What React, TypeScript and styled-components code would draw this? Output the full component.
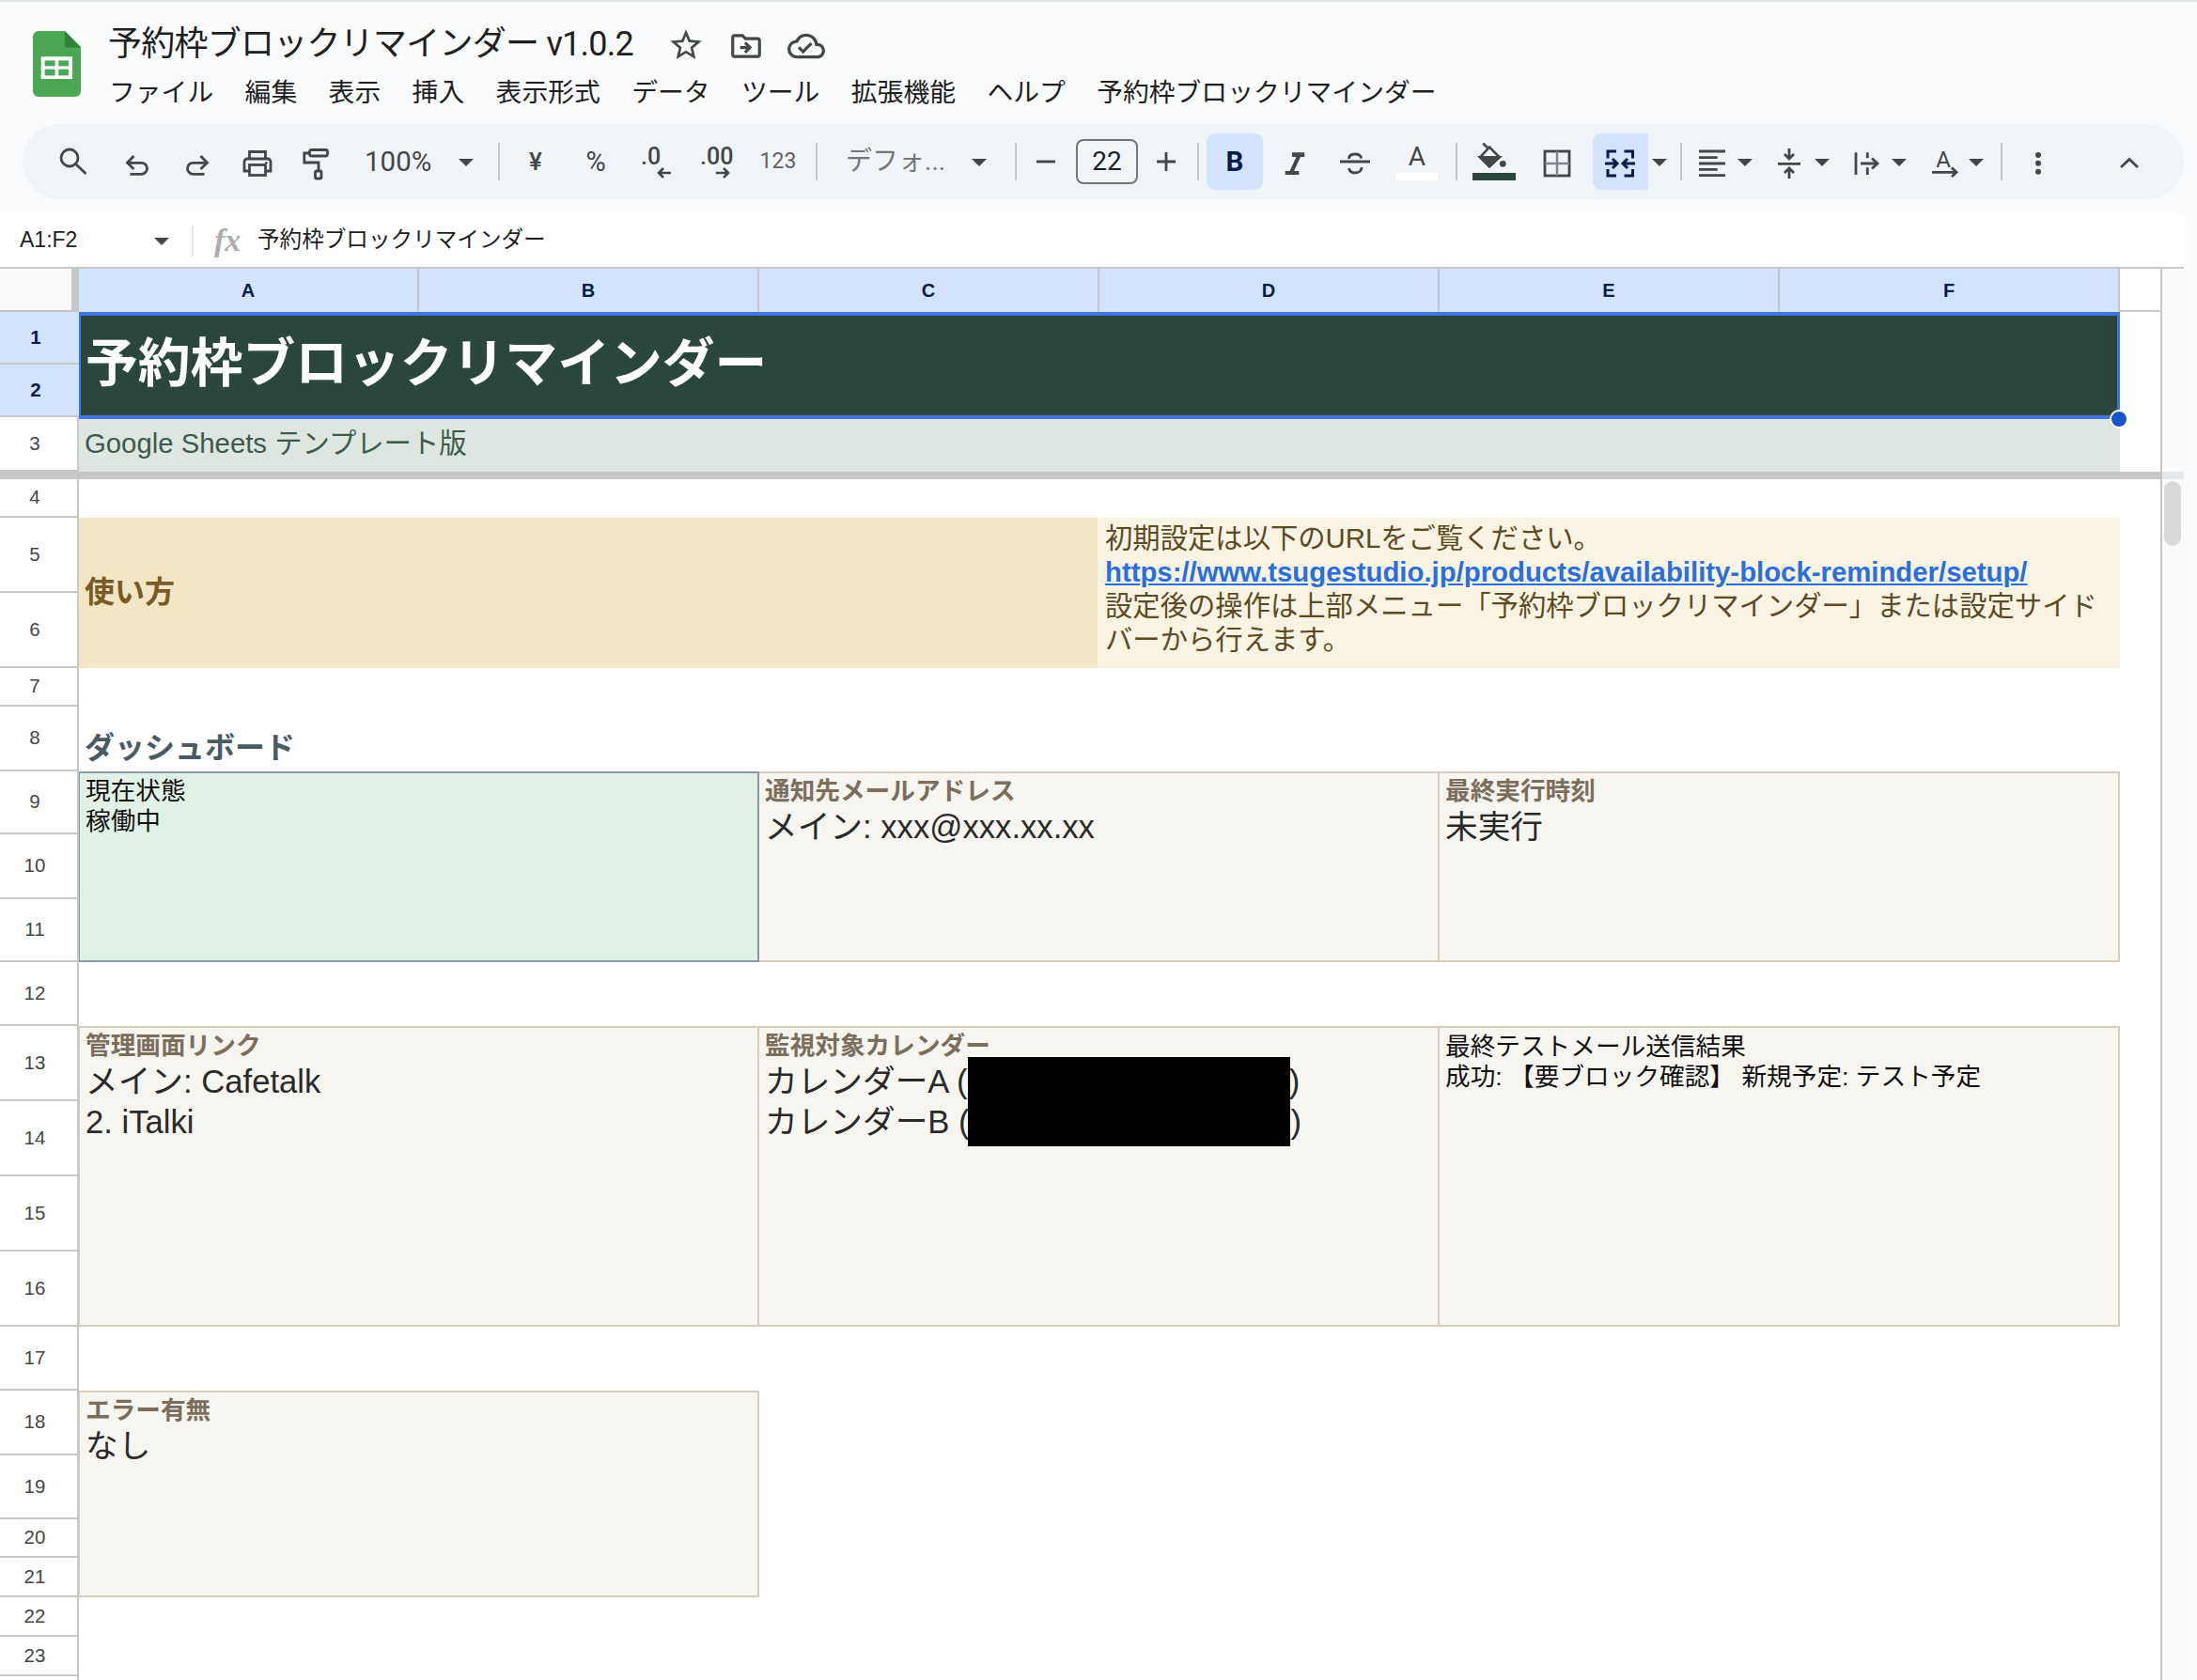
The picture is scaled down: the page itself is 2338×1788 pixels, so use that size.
import styled, { createGlobalStyle } from "styled-components";
import { MdOutlineStarBorder, MdOutlineDriveFileMove, MdOutlineCloudDone } from "react-icons/md";

const sheetFont = `"Liberation Sans", "Noto Sans CJK JP", sans-serif`;
const uiFont = `Roboto, "Noto Sans CJK JP", sans-serif`;

const Global = createGlobalStyle`
  * { box-sizing: border-box; }
  html, body { margin: 0; padding: 0; overflow: hidden; background: #f9fbfd; }
`;

// sheet row number -> grid line (row 1 of the grid is the column header, the frozen bar sits after row 3)
const line = (n: number) => (n <= 3 ? n + 1 : n + 2);

const rowNumbers = Array.from({ length: 23 }, (_, i) => i + 1);
const menus = ["ファイル", "編集", "表示", "挿入", "表示形式", "データ", "ツール", "拡張機能", "ヘルプ", "予約枠ブロックリマインダー"];

const App = () => {
  return (
    <Page>
      <Global />
      <TopStrip />
      <Header>
        <Logo viewBox="0 0 51 70">
          <path d="M6 0H34L51 17V64a6 6 0 0 1-6 6H6a6 6 0 0 1-6-6V6a6 6 0 0 1 6-6z" fill="#4ba754" />
          <path d="M34 0L51 17.4H34z" fill="#2f8237" />
          <rect x="8.7" y="27.3" width="33.4" height="23.7" fill="#fff" />
          <rect x="12.6" y="31.4" width="11" height="6" fill="#4ba754" />
          <rect x="27.3" y="31.4" width="10.7" height="6" fill="#4ba754" />
          <rect x="12.6" y="40.7" width="11" height="6.7" fill="#4ba754" />
          <rect x="27.3" y="40.7" width="10.7" height="6.7" fill="#4ba754" />
        </Logo>
        <HeaderText>
          <TitleRow>
            <DocTitle>予約枠ブロックリマインダー v1.0.2</DocTitle>
            <StarIcon />
            <MoveIcon />
            <CloudIcon />
          </TitleRow>
          <MenuBar>
            {menus.map((m) => (
              <MenuItem key={m}>{m}</MenuItem>
            ))}
          </MenuBar>
        </HeaderText>
      </Header>

      <Toolbar>
        <Tool $gap={34}>
          <Icon viewBox="0 0 40 40">
            <circle cx="16" cy="16" r="9" />
            <path d="M22.5 22.5L33.5 33" />
          </Icon>
        </Tool>
        <Tool $gap={29}>
          <Icon viewBox="0 0 40 40">
            <path d="M15.5 14L8.5 21.3L15.5 28M9 21.3H23.5A6 6 0 0 1 23.5 33.3H11.5" />
          </Icon>
        </Tool>
        <Tool $gap={22}>
          <Icon viewBox="0 0 40 40">
            <path d="M24.5 14L31.5 21.3L24.5 28M31 21.3H16.5A6 6 0 0 0 16.5 33.3H28.5" />
          </Icon>
        </Tool>
        <Tool $gap={25}>
          <Icon viewBox="0 0 40 40">
            <path d="M11.5 16V9.5H28.5V16M11 30H6V20a3 3 0 0 1 3-3H31a3 3 0 0 1 3 3V30H29" />
            <rect x="11.5" y="23.5" width="17" height="11" />
            <circle cx="29.3" cy="21.3" r="1.3" fill="#444746" stroke="none" />
          </Icon>
        </Tool>
        <Tool $gap={24}>
          <Icon viewBox="0 0 40 40">
            <rect x="11.5" y="7.5" width="19" height="6.5" rx="2" />
            <path d="M11 11H5.8V21H21V30" />
            <rect x="17.5" y="30" width="6.5" height="8" rx="1.5" />
          </Icon>
        </Tool>
        <ZoomText>100%</ZoomText>
        <Caret $gap={27} />
        <Sep $gap={26} />
        <GlyphTool $gap={18} $size={26} $weight={500}>¥</GlyphTool>
        <GlyphTool $gap={24} $size={29}>%</GlyphTool>
        <DecimalTool $gap={24}>
          <DecimalText>.0</DecimalText>
          <DecimalArrow $left={17} viewBox="0 0 16 12">
            <path d="M15 6H2M7 1L2 6L7 11" />
          </DecimalArrow>
        </DecimalTool>
        <DecimalTool $gap={23}>
          <DecimalText>.00</DecimalText>
          <DecimalArrow $left={16} viewBox="0 0 16 12">
            <path d="M1 6H14M9 1L14 6L9 11" />
          </DecimalArrow>
        </DecimalTool>
        <GlyphTool $gap={27} $size={23} $color="#5f6368">123</GlyphTool>
        <Sep $gap={20} />
        <FontName>デフォ...</FontName>
        <Caret $gap={30} />
        <Sep $gap={30} />
        <Tool $gap={11}>
          <Icon viewBox="0 0 40 40">
            <path d="M10 20H30" />
          </Icon>
        </Tool>
        <SizeBox>22</SizeBox>
        <Tool $gap={10}>
          <Icon viewBox="0 0 40 40">
            <path d="M10 20H30M20 10V30" />
          </Icon>
        </Tool>
        <Sep $gap={13} />
        <BoldButton>B</BoldButton>
        <Tool $gap={15}>
          <Icon viewBox="0 0 40 40">
            <path d="M16 10.3H29.3V15H25L18 30H23.3V34H8.7V30H13.5L20.5 15H16z" fill="#444746" stroke="none" />
          </Icon>
        </Tool>
        <Tool $gap={23}>
          <Icon viewBox="0 0 40 40">
            <path d="M4 20H36M13.5 17C13.5 13 17 12 20 12C23 12 26 13 26.8 16.5M27 26C27 30 24 32 20 32C16 32 14 30 13.5 27" />
          </Icon>
        </Tool>
        <ColorTool $gap={23}>
          <ColorLetter>A</ColorLetter>
          <ColorBar $color="#ffffff" />
        </ColorTool>
        <Sep $gap={18} />
        <ColorTool $gap={16}>
          <FillIcon viewBox="0 0 46 30">
            <path d="M11.3 .5L17 6.3M8 15.3L18 4.7L28.7 15.3L18 25.3z" />
            <path d="M8 15.3H28.7L18 25.3z" fill="#444746" />
            <circle cx="32.3" cy="22.3" r="3.4" fill="#444746" stroke="none" />
          </FillIcon>
          <ColorBar $color="#2b473b" />
        </ColorTool>
        <Tool $gap={25}>
          <Icon viewBox="0 0 40 40">
            <rect x="6" y="9" width="26" height="26" />
            <BorderInner d="M19 9V35M6 22H32" />
          </Icon>
        </Tool>
        <MergeButton>
          <MergeIcon viewBox="0 0 59 40">
            <path d="M25 9H16V16.5M16 28V35H25M33.5 9H42.5V16.5M42.5 28V35H33.5" />
            <path d="M13 22H26M21 17L26 22L21 27M45 22H32M37 17L32 22L37 27" />
          </MergeIcon>
        </MergeButton>
        <Caret $gap={4} />
        <Sep $gap={14} />
        <Tool $gap={13}>
          <Icon viewBox="0 0 40 40">
            <path d="M5 9H33M5 15.7H24.7M5 22H33M5 28.3H24.7M5 34.7H33" />
          </Icon>
        </Tool>
        <Caret $gap={6} />
        <Tool $gap={20}>
          <Icon viewBox="0 0 40 40">
            <path d="M7 22.3H31M19 6V16M14 12L19 17L24 12M19 38V27.5M14 32L19 27L24 32" />
          </Icon>
        </Tool>
        <Caret $gap={6} />
        <Tool $gap={21}>
          <Icon viewBox="0 0 40 40">
            <path d="M7 10.3V34M19.3 10.3V16.3M19.3 26.3V34M12 22H29M24 16.5L30 22L24 27.5" />
          </Icon>
        </Tool>
        <Caret $gap={5} />
        <Tool $gap={21}>
          <Icon viewBox="0 0 40 40">
            <IconLetter x="18" y="26">A</IconLetter>
            <path d="M6 31.3H31M27 26.5L32 31.3L27 36" />
          </Icon>
        </Tool>
        <Caret $gap={5} />
        <Sep $gap={18} />
        <Tool $gap={18}>
          <Icon viewBox="0 0 40 40">
            <circle cx="20" cy="13" r="3" fill="#444746" stroke="none" />
            <circle cx="20" cy="21.7" r="3" fill="#444746" stroke="none" />
            <circle cx="20" cy="30.7" r="3" fill="#444746" stroke="none" />
          </Icon>
        </Tool>
        <Tool $gap={57}>
          <Icon viewBox="0 0 40 40">
            <path d="M11 26L20 17.5L29 26" />
          </Icon>
        </Tool>
      </Toolbar>

      <FormulaBar>
        <NameBox>A1:F2</NameBox>
        <Caret $gap={0} />
        <FormulaSep />
        <FxLabel>fx</FxLabel>
        <FormulaText>予約枠ブロックリマインダー</FormulaText>
      </FormulaBar>

      <Sheet>
        <Corner />
        {["A", "B", "C", "D", "E", "F"].map((c) => (
          <ColHead key={c}>{c}</ColHead>
        ))}
        <HeadFiller />
        <GutterTop />

        {rowNumbers.map((n) => (
          <RowHead key={n} $row={line(n)} $selected={n <= 2}>
            {n}
          </RowHead>
        ))}
        <LastRowHead />

        <TitleCell>
          予約枠ブロックリマインダー
          <FillHandle />
        </TitleCell>
        <SubtitleCell>Google Sheets テンプレート版</SubtitleCell>
        <FrozenBar />
        <FrozenStub />
        <GutterBottom>
          <ScrollThumb />
        </GutterBottom>

        <GuideLabel>使い方</GuideLabel>
        <GuideText>
          初期設定は以下のURLをご覧ください。
          <br />
          <GuideLink>https://www.tsugestudio.jp/products/availability-block-reminder/setup/</GuideLink>
          <br />
          設定後の操作は上部メニュー「予約枠ブロックリマインダー」または設定サイドバーから行えます。
        </GuideText>
        <SectionTitle>ダッシュボード</SectionTitle>

        <StatusCard $col="2 / 4" $row={`${line(9)} / ${line(12)}`} $first>
          <PlainLine>現在状態</PlainLine>
          <PlainLine>稼働中</PlainLine>
        </StatusCard>
        <InfoCard $col="4 / 6" $row={`${line(9)} / ${line(12)}`}>
          <CardLabel>通知先メールアドレス</CardLabel>
          <CardValue>メイン: xxx@xxx.xx.xx</CardValue>
        </InfoCard>
        <InfoCard $col="6 / 8" $row={`${line(9)} / ${line(12)}`}>
          <CardLabel>最終実行時刻</CardLabel>
          <CardValue>未実行</CardValue>
        </InfoCard>

        <InfoCard $col="2 / 4" $row={`${line(13)} / ${line(17)}`} $first>
          <CardLabel>管理画面リンク</CardLabel>
          <CardValue>メイン: Cafetalk</CardValue>
          <CardValue>2. iTalki</CardValue>
        </InfoCard>
        <InfoCard $col="4 / 6" $row={`${line(13)} / ${line(17)}`}>
          <CardLabel>監視対象カレンダー</CardLabel>
          <CardValue>
            カレンダーA (<HiddenGap />)
          </CardValue>
          <CardValue>
            カレンダーB (<HiddenGap />)
          </CardValue>
          <Redaction />
        </InfoCard>
        <InfoCard $col="6 / 8" $row={`${line(13)} / ${line(17)}`}>
          <PlainLine>最終テストメール送信結果</PlainLine>
          <PlainLine>成功: 【要ブロック確認】 新規予定: テスト予定</PlainLine>
        </InfoCard>

        <InfoCard $col="2 / 4" $row={`${line(18)} / ${line(22)}`} $first>
          <CardLabel>エラー有無</CardLabel>
          <CardValue>なし</CardValue>
        </InfoCard>
      </Sheet>
    </Page>
  );
};

export default App;

const Page = styled.div`
  width: 2338px;
  height: 1788px;
  background: #f9fbfd;
  overflow: hidden;
`;
const TopStrip = styled.div`
  height: 2px;
  background: #dfe7e3;
`;
const Header = styled.header`
  height: 130px;
  display: flex;
  padding-left: 35px;
  gap: 29px;
`;
const Logo = styled.svg`
  width: 51px;
  height: 70px;
  margin-top: 31px;
  flex: none;
`;
const HeaderText = styled.div`
  display: flex;
  flex-direction: column;
  padding-top: 25px;
`;
const TitleRow = styled.div`
  display: flex;
  align-items: center;
  height: 40px;
  color: #444746;
`;
const DocTitle = styled.div`
  font: 400 36px/40px ${uiFont};
  letter-spacing: -0.75px;
  color: #1f1f1f;
  width: 595px;
  white-space: nowrap;
`;
const StarIcon = styled(MdOutlineStarBorder)`
  width: 40px;
  height: 40px;
  margin-top: 2px;
`;
const MoveIcon = styled(MdOutlineDriveFileMove)`
  width: 38px;
  height: 38px;
  margin-left: 25px;
  margin-top: 4px;
`;
const CloudIcon = styled(MdOutlineCloudDone)`
  width: 40px;
  height: 40px;
  margin-left: 25px;
  margin-top: 4px;
`;
const MenuBar = styled.nav`
  display: flex;
  gap: 33.4px;
  margin-top: 14px;
  padding-left: 1px;
`;
const MenuItem = styled.span`
  font: 400 27.8px/36px ${uiFont};
  color: #1f1f1f;
  white-space: nowrap;
`;

const Toolbar = styled.div`
  width: 2300px;
  height: 80px;
  margin: 0 0 16px 24px;
  border-radius: 40px;
  background: #f0f4f9;
  display: flex;
  align-items: center;
  color: #444746;
`;
const Tool = styled.div<{ $gap: number }>`
  width: 40px;
  height: 40px;
  flex: none;
  margin-left: ${(p) => p.$gap}px;
`;
const Icon = styled.svg`
  display: block;
  width: 40px;
  height: 40px;
  fill: none;
  stroke: #444746;
  stroke-width: 2.8;
`;
const BorderInner = styled.path`
  stroke: #80868b;
  stroke-width: 2.4;
`;
const IconLetter = styled.text`
  font: 400 24px ${uiFont};
  fill: #444746;
  stroke: none;
  text-anchor: middle;
`;
const ZoomText = styled.div`
  margin-left: 30px;
  width: 73px;
  font: 400 29.5px/40px ${uiFont};
`;
const Caret = styled.i<{ $gap: number }>`
  flex: none;
  width: 0;
  height: 0;
  margin-left: ${(p) => p.$gap}px;
  margin-top: 2px;
  border-left: 8px solid transparent;
  border-right: 8px solid transparent;
  border-top: 8px solid #444746;
`;
const Sep = styled.div<{ $gap: number }>`
  flex: none;
  width: 2px;
  height: 40px;
  background: #c7c7c7;
  margin-left: ${(p) => p.$gap}px;
`;
const GlyphTool = styled.div<{ $gap: number; $size: number; $weight?: number; $color?: string }>`
  flex: none;
  width: 40px;
  margin-left: ${(p) => p.$gap}px;
  text-align: center;
  font-family: ${uiFont};
  font-size: ${(p) => p.$size}px;
  font-weight: ${(p) => p.$weight ?? 400};
  line-height: 40px;
  color: ${(p) => p.$color ?? "#444746"};
`;
const DecimalTool = styled.div<{ $gap: number }>`
  flex: none;
  width: 40px;
  height: 40px;
  margin-left: ${(p) => p.$gap}px;
  padding: 5px 0 0 4px;
`;
const DecimalText = styled.div`
  font: 500 25px/20px ${uiFont};
  color: #444746;
`;
const DecimalArrow = styled.svg<{ $left: number }>`
  display: block;
  width: 16px;
  height: 12px;
  margin: 1px 0 0 ${(p) => p.$left}px;
  fill: none;
  stroke: #444746;
  stroke-width: 2.6;
`;
const FontName = styled.div`
  margin-left: 30px;
  width: 104px;
  font: 400 28px/40px ${uiFont};
  color: #747775;
  white-space: nowrap;
`;
const SizeBox = styled.div`
  flex: none;
  width: 66px;
  height: 48px;
  margin-left: 12px;
  border: 2px solid #747775;
  border-radius: 8px;
  text-align: center;
  font: 400 28px/44px ${uiFont};
  color: #1f1f1f;
`;
const BoldButton = styled.div`
  flex: none;
  width: 60px;
  height: 60px;
  margin-left: 8px;
  border-radius: 9px;
  background: #d3e3fd;
  text-align: center;
  font: 700 29.5px/60px ${uiFont};
  color: #041e49;
`;
const ColorTool = styled.div<{ $gap: number }>`
  flex: none;
  width: 46px;
  height: 40px;
  margin-left: ${(p) => p.$gap}px;
  display: flex;
  flex-direction: column;
  justify-content: flex-end;
`;
const ColorLetter = styled.div`
  text-align: center;
  font: 400 28px/30px ${uiFont};
  color: #444746;
  margin-top: -2px;
  height: 28px;
  margin-bottom: 4px;
`;
const ColorBar = styled.div<{ $color: string }>`
  height: 8px;
  background: ${(p) => p.$color};
`;
const FillIcon = styled.svg`
  display: block;
  width: 46px;
  height: 30px;
  margin-bottom: 2px;
  fill: none;
  stroke: #444746;
  stroke-width: 2.6;
`;
const MergeButton = styled.div`
  flex: none;
  width: 59px;
  height: 60px;
  margin-left: 17px;
  padding-top: 10px;
  border-radius: 9px 0 0 9px;
  background: #d3e3fd;
`;
const MergeIcon = styled.svg`
  display: block;
  width: 59px;
  height: 40px;
  fill: none;
  stroke: #041e49;
  stroke-width: 3;
`;

const FormulaBar = styled.div`
  width: 2324px;
  height: 56px;
  background: #fff;
  display: flex;
  align-items: center;
  padding-left: 21px;
`;
const NameBox = styled.div`
  width: 143px;
  padding-bottom: 2px;
  font: 400 23px/30px ${sheetFont};
  color: #1f1f1f;
`;
const FormulaSep = styled.div`
  width: 2px;
  height: 33px;
  margin-left: 24px;
  background: #e1e3e1;
`;
const FxLabel = styled.div`
  width: 68px;
  padding-left: 22px;
  font: italic 700 34px/40px "Liberation Serif", serif;
  color: #adadad;
`;
const FormulaText = styled.div`
  padding-bottom: 3px;
  font: 400 23.6px/30px ${sheetFont};
  color: #1f1f1f;
`;

const Sheet = styled.div`
  width: 2324px;
  border-top: 2px solid #c7c7c7;
  background: #fff;
  display: grid;
  grid-template-columns: 84px repeat(6, 362px) 43px 25px;
  grid-template-rows: 46px 56px 56px 58px 8px 41px 80px 80px 41px 69px 67px 69px 67px 68px 80px 80px 80px 80px 68px 69px 68px 41px 42px 42px 42px 4px;
  font-family: ${sheetFont};
`;
const Corner = styled.div`
  grid-column: 1;
  grid-row: 1;
  background: #f8f9fa;
  border-right: 8px solid #c7c7c7;
  border-bottom: 2px solid #c7c7c7;
`;
const ColHead = styled.div`
  grid-row: 1;
  background: #d3e3fd;
  border-right: 2px solid #c7c7c7;
  display: flex;
  align-items: center;
  justify-content: center;
  font-size: 20px;
  font-weight: 700;
  color: #041e49;
`;
const HeadFiller = styled.div`
  grid-column: 8;
  grid-row: 1;
  border-bottom: 2px solid #c7c7c7;
`;
const GutterTop = styled.div`
  grid-column: 9;
  grid-row: 1 / 5;
  background: #fafafa;
  border-left: 2px solid #c7c7c7;
`;
const GutterBottom = styled.div`
  grid-column: 9;
  grid-row: 6 / -1;
  background: #fafafa;
  border-left: 2px solid #c7c7c7;
  padding: 2px 3px 0 2px;
`;
const ScrollThumb = styled.div`
  height: 69px;
  border-radius: 10px;
  background: #dadada;
`;
const FrozenStub = styled.div`
  grid-column: 9;
  grid-row: 5;
  background: #e4e7ec;
  border-left: 2px solid #c7c7c7;
`;
const RowHead = styled.div<{ $row: number; $selected: boolean }>`
  grid-column: 1;
  grid-row: ${(p) => p.$row};
  background: ${(p) => (p.$selected ? "#d3e3fd" : "#fff")};
  border-bottom: 2px solid #c7c7c7;
  border-right: ${(p) => (p.$selected ? "none" : "2px solid #c7c7c7")};
  display: flex;
  align-items: center;
  justify-content: center;
  padding: 0 8px 1px 0;
  font-size: 20.5px;
  font-weight: ${(p) => (p.$selected ? 700 : 400)};
  color: ${(p) => (p.$selected ? "#041e49" : "#444746")};
`;
const LastRowHead = styled.div`
  grid-column: 1;
  grid-row: ${line(24)};
  border-right: 2px solid #c7c7c7;
`;
const TitleCell = styled.div`
  grid-column: 2 / 8;
  grid-row: 2 / 4;
  margin-bottom: -2px;
  z-index: 2;
  position: relative;
  background: #2b473b;
  border: solid #3f76e3;
  border-width: 4px 3px 4px 2px;
  display: flex;
  align-items: center;
  padding: 0 0 15px 5px;
  font-size: 55.8px;
  font-weight: 700;
  color: #fff;
  white-space: nowrap;
`;
const FillHandle = styled.span`
  position: absolute;
  right: -12px;
  bottom: -14px;
  width: 20px;
  height: 20px;
  border-radius: 50%;
  background: #1b53c9;
  border: 2px solid #fff;
`;
const SubtitleCell = styled.div`
  grid-column: 2 / 8;
  grid-row: 4;
  background: #dde6e1;
  display: flex;
  align-items: center;
  padding: 0 0 9px 6px;
  font-size: 29.33px;
  color: #3d5a4c;
`;
const FrozenBar = styled.div`
  grid-column: 1 / 9;
  grid-row: 5;
  background: #c7c7c7;
`;
const GuideLabel = styled.div`
  grid-column: 2 / 5;
  grid-row: ${line(5)} / ${line(7)};
  background: #f3e6c4;
  display: flex;
  align-items: center;
  padding: 0 0 9px 6px;
  font-size: 32px;
  font-weight: 700;
  color: #7a5a25;
`;
const GuideText = styled.div`
  grid-column: 5 / 8;
  grid-row: ${line(5)} / ${line(7)};
  margin-left: -2px;
  z-index: 1;
  background: #f9f3e3;
  padding: 4px 18px 0 8px;
  font-size: 29.33px;
  line-height: 36px;
  color: #5c4a22;
`;
const GuideLink = styled.span`
  font-weight: 700;
  color: #2a6fdb;
  text-decoration: underline;
`;
const SectionTitle = styled.div`
  grid-column: 2 / 8;
  grid-row: ${line(8)};
  display: flex;
  align-items: flex-end;
  padding-left: 6px;
  font-size: 32px;
  line-height: 50px;
  font-weight: 700;
  color: #4a5a63;
`;
const InfoCard = styled.div<{ $col: string; $row: string; $first?: boolean }>`
  grid-column: ${(p) => p.$col};
  grid-row: ${(p) => p.$row};
  position: relative;
  background: #f6f5f0;
  border: solid #d6cdbd;
  border-width: 2px 2px 2px ${(p) => (p.$first ? 1 : 0)}px;
  padding: 4px 6px 0;
  white-space: nowrap;
`;
const StatusCard = styled(InfoCard)`
  background: #e2f1e5;
  border-color: #8a9aa8;
  padding-top: 3px;
`;
const CardLabel = styled.div`
  font-size: 26.67px;
  line-height: 30px;
  font-weight: 700;
  color: #7b6e5d;
`;
const CardValue = styled.div`
  font-size: 34.67px;
  line-height: 43px;
  color: #2a2a2a;
  ${CardLabel} + & {
    margin-top: 2px;
  }
`;
const PlainLine = styled.div`
  font-size: 26.67px;
  line-height: 32px;
  color: #111;
`;
const HiddenGap = styled.span`
  display: inline-block;
  width: 342px;
`;
const Redaction = styled.div`
  position: absolute;
  left: 222px;
  top: 31px;
  width: 343px;
  height: 95px;
  background: #000;
`;
